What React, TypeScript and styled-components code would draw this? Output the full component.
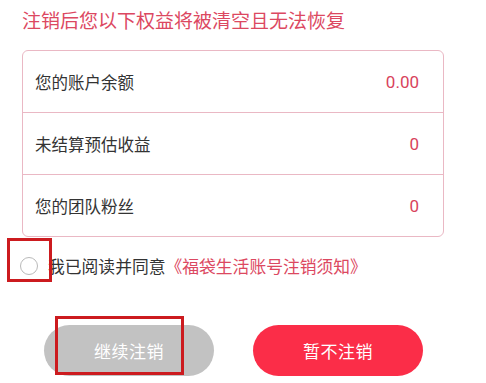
import React from "react";
import styled, { createGlobalStyle } from "styled-components";

const GlobalStyle = createGlobalStyle`
  html, body {
    margin: 0;
    padding: 0;
    background: #ffffff;
  }
  body {
    font-family: "Noto Sans CJK SC", "Noto Sans", sans-serif;
  }
`;

const Page = styled.div`
  position: relative;
  width: 486px;
  height: 383px;
  overflow: hidden;
  background: #ffffff;
`;

const Title = styled.h1`
  margin: 0;
  padding: 6px 0 0 22px;
  font-size: 19px;
  line-height: 28px;
  font-weight: 400;
  color: #dc4861;
`;

const Card = styled.div`
  margin: 16px 0 0 22px;
  width: 420px;
  border: 1px solid #eab8c4;
  border-radius: 6px;
  display: flex;
  flex-direction: column;
`;

const Row = styled.div`
  height: 61px;
  display: flex;
  align-items: center;
  justify-content: space-between;
  padding: 0 24px 0 12px;
  & + & {
    border-top: 1px solid #eab8c4;
  }
`;

const Label = styled.span`
  font-size: 16.5px;
  color: #333333;
`;

const Value = styled.span`
  font-family: "Roboto", "Noto Sans", sans-serif;
  font-size: 17px;
  color: #d8435c;
`;

const Agree = styled.div`
  display: flex;
  align-items: center;
  margin: 18px 0 0 20px;
  height: 22px;
  font-size: 16.8px;
`;

const Radio = styled.span`
  width: 18px;
  height: 18px;
  border-radius: 50%;
  border: 1px solid #b9b9b9;
  box-sizing: border-box;
  margin-right: 10px;
`;

const AgreeText = styled.span`
  color: #333333;
`;

const Link = styled.span`
  color: #dc4861;
`;

const Buttons = styled.div`
  display: flex;
  gap: 39px;
  margin: 48px 0 0 44px;
`;

const Button = styled.button<{ $primary?: boolean }>`
  width: 170px;
  height: 51px;
  border: none;
  border-radius: 26px;
  background: ${(p) => (p.$primary ? "#fb2d48" : "#c2c2c2")};
  color: #ffffff;
  font-family: "Noto Sans CJK SC", sans-serif;
  font-size: 17px;
  letter-spacing: 0.5px;
  padding: 0;
`;

const Mark = styled.div<{ $x: number; $y: number; $w: number; $h: number }>`
  position: absolute;
  left: ${(p) => p.$x}px;
  top: ${(p) => p.$y}px;
  width: ${(p) => p.$w}px;
  height: ${(p) => p.$h}px;
  border: 3px solid #cc1b1f;
  box-sizing: border-box;
  pointer-events: none;
`;

const rows = [
  { label: "您的账户余额", value: "0.00" },
  { label: "未结算预估收益", value: "0" },
  { label: "您的团队粉丝", value: "0" },
];

export default function App() {
  return (
    <Page>
      <GlobalStyle />
      <Title>注销后您以下权益将被清空且无法恢复</Title>
      <Card>
        {rows.map((r) => (
          <Row key={r.label}>
            <Label>{r.label}</Label>
            <Value>{r.value}</Value>
          </Row>
        ))}
      </Card>
      <Agree>
        <Radio />
        <AgreeText>我已阅读并同意</AgreeText>
        <Link>《福袋生活账号注销须知》</Link>
      </Agree>
      <Buttons>
        <Button>继续注销</Button>
        <Button $primary>暂不注销</Button>
      </Buttons>
      <Mark $x={7} $y={238} $w={45} $h={44} />
      <Mark $x={55} $y={316} $w={129} $h={59} />
    </Page>
  );
}
